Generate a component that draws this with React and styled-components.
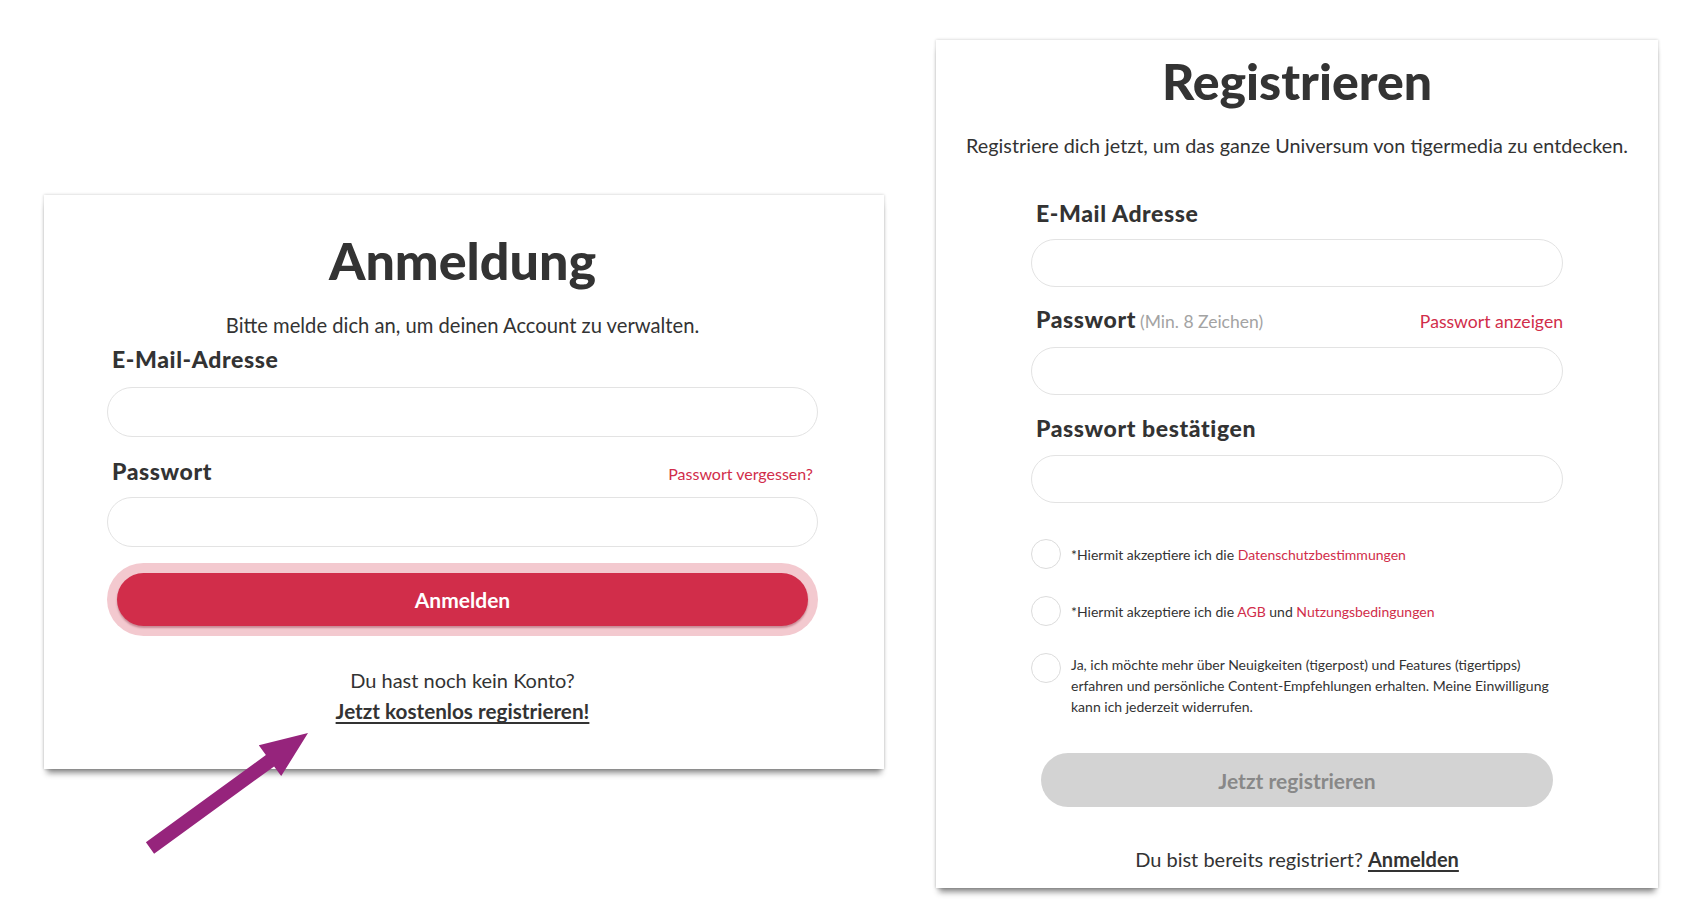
import React from 'react';
import styled, { createGlobalStyle } from 'styled-components';

const GlobalStyle = createGlobalStyle`
    * { box-sizing: border-box; }
    body {
        margin: 0;
        background: #ffffff;
        font-family: Lato, "Open Sans", "Liberation Sans", sans-serif;
        color: #333333;
    }
`

const Page = styled.div`
    position: relative;
    width: 1702px;
    height: 922px;
    display: flex;
    align-items: flex-start;
    gap: 52px;
    padding: 40px 0 0 44px;
    overflow: hidden;
`
const Card = styled.div`
    background: #ffffff;
    box-shadow: 0 0 3px rgba(0, 0, 0, 0.22), 0 7px 6px -3px rgba(0, 0, 0, 0.45);
    display: flex;
    flex-direction: column;
    align-items: center;
`
const LoginCard = styled(Card)`
    width: 840px;
    margin-top: 155px;
    padding: 34px 66px 42px 63px;
`
const RegisterCard = styled(Card)`
    width: 722px;
    padding: 11px 0 15px 0;
`
const Title = styled.h1`
    margin: 0;
    font-size: ${p => p.$size || 52}px;
    line-height: 1.2;
    font-weight: 900;
    color: #333333;
    text-align: center;
`
const Lead = styled.p`
    margin: ${p => p.$gap || 20}px 0 0 0;
    font-size: ${p => p.$size || 20}px;
    line-height: ${p => p.$line || 28}px;
    text-align: center;
`
const Form = styled.div`
    width: ${p => p.$width || '100%'};
    display: flex;
    flex-direction: column;
    margin-top: ${p => p.$top || 0}px;
`
const LabelRow = styled.div`
    display: flex;
    justify-content: space-between;
    align-items: baseline;
    height: 28px;
    padding: 0 ${p => p.$right || 0}px 0 5px;
    margin-top: ${p => p.$top || 0}px;
    line-height: 28px;
    white-space: nowrap;
`
const Label = styled.label`
    font-size: 23px;
    font-weight: 900;
    letter-spacing: 0.6px;
    color: #333333;
`
const Hint = styled.span`
    font-size: 17.5px;
    font-weight: 400;
    letter-spacing: 0;
    color: #a3a3a3;
    margin-left: 4px;
`
const RedLink = styled.a`
    font-size: ${p => p.$size || 16}px;
    color: #d12d4a;
    text-decoration: none;
    cursor: pointer;
`
const Input = styled.input`
    display: block;
    width: 100%;
    height: ${p => p.$height || 49}px;
    margin-top: ${p => p.$top || 13}px;
    border: 1px solid #e3e3e3;
    border-radius: 999px;
    background: #ffffff;
    outline: none;
    padding: 0 22px;
    font: inherit;
    font-size: 18px;
`
const ButtonRing = styled.div`
    margin-top: ${p => p.$top || 0}px;
    padding: 10px;
    border-radius: 999px;
    background: ${p => p.$ring || 'transparent'};
`
const Button = styled.button`
    display: block;
    width: 100%;
    height: ${p => p.$height || 53}px;
    border: none;
    border-radius: 999px;
    background: ${p => p.$bg};
    color: ${p => p.$color};
    font-family: inherit;
    font-size: 21px;
    font-weight: 700;
    box-shadow: ${p => p.$shadow ? '0 2px 2px rgba(120, 20, 40, 0.35)' : 'none'};
    cursor: pointer;
`
const Footer = styled.div`
    margin-top: ${p => p.$top || 0}px;
    font-size: 20px;
    line-height: ${p => p.$line || 28}px;
    text-align: center;
`
const StrongLink = styled.a`
    display: ${p => p.$block ? 'block' : 'inline'};
    font-size: ${p => p.$size || 20}px;
    font-weight: 700;
    color: #333333;
    text-decoration: underline;
    text-underline-offset: 3px;
    cursor: pointer;
`
const Consents = styled.div`
    display: flex;
    flex-direction: column;
    gap: 27px;
    margin-top: 36px;
`
const ConsentRow = styled.label`
    display: flex;
    align-items: ${p => p.$top ? 'flex-start' : 'center'};
    gap: 10px;
    cursor: pointer;
`
const Circle = styled.span`
    flex: none;
    width: 30px;
    height: 30px;
    border: 1px solid #dcdcdc;
    border-radius: 50%;
    background: #ffffff;
`
const ConsentText = styled.span`
    font-size: 14px;
    line-height: 21px;
    color: #333333;
    padding-top: ${p => p.$top ? 1 : 0}px;
`
const Arrow = styled.svg`
    position: absolute;
    left: 140px;
    top: 728px;
    width: 175px;
    height: 130px;
`

function Login() {
    return (
        <LoginCard>
            <Title>Anmeldung</Title>
            <Lead $size={20.2}>Bitte melde dich an, um deinen Account zu verwalten.</Lead>
            <Form $top={6}>
                <LabelRow>
                    <Label>E-Mail-Adresse</Label>
                </LabelRow>
                <Input type="email" $height={50} $top={14} />
                <LabelRow $top={20} $right={5}>
                    <Label>Passwort</Label>
                    <RedLink>Passwort vergessen?</RedLink>
                </LabelRow>
                <Input type="password" $height={50} $top={12} />
                <ButtonRing $top={16} $ring="#f3c9cf">
                    <Button $bg="#d12d4a" $color="#ffffff" $shadow>Anmelden</Button>
                </ButtonRing>
            </Form>
            <Footer $top={29} $line={31}>
                Du hast noch kein Konto?
                <StrongLink $block $size={20.7}>Jetzt kostenlos registrieren!</StrongLink>
            </Footer>
        </LoginCard>
    )
}

function Register() {
    return (
        <RegisterCard>
            <Title $size={50}>Registrieren</Title>
            <Lead $size={19.8} $line={26} $gap={21}>
                Registriere dich jetzt, um das ganze Universum von tigermedia zu entdecken.
            </Lead>
            <Form $width="532px" $top={41}>
                <LabelRow>
                    <Label>E-Mail Adresse</Label>
                </LabelRow>
                <Input type="email" $height={48} $top={12} />
                <LabelRow $top={18}>
                    <Label>Passwort<Hint>(Min. 8 Zeichen)</Hint></Label>
                    <RedLink $size={17.6}>Passwort anzeigen</RedLink>
                </LabelRow>
                <Input type="password" $height={48} $top={14} />
                <LabelRow $top={19}>
                    <Label>Passwort bestätigen</Label>
                </LabelRow>
                <Input type="password" $height={48} $top={13} />
                <Consents>
                    <ConsentRow>
                        <Circle />
                        <ConsentText>
                            *Hiermit akzeptiere ich die <RedLink $size={14}>Datenschutzbestimmungen</RedLink>
                        </ConsentText>
                    </ConsentRow>
                    <ConsentRow>
                        <Circle />
                        <ConsentText>
                            *Hiermit akzeptiere ich die <RedLink $size={14}>AGB</RedLink> und <RedLink $size={14}>Nutzungsbedingungen</RedLink>
                        </ConsentText>
                    </ConsentRow>
                    <ConsentRow $top>
                        <Circle />
                        <ConsentText $top>
                            Ja, ich möchte mehr über Neuigkeiten (tigerpost) und Features (tigertipps)<br />
                            erfahren und persönliche Content-Empfehlungen erhalten. Meine Einwilligung<br />
                            kann ich jederzeit widerrufen.
                        </ConsentText>
                    </ConsentRow>
                </Consents>
                <ButtonRing $top={26}>
                    <Button $bg="#d3d3d3" $color="#888888" $height={54}>Jetzt registrieren</Button>
                </ButtonRing>
            </Form>
            <Footer $top={28}>
                Du bist bereits registriert? <StrongLink>Anmelden</StrongLink>
            </Footer>
        </RegisterCard>
    )
}

function App() {
    return (
        <>
            <GlobalStyle />
            <Page>
                <Login />
                <Register />
                <Arrow viewBox="0 0 175 130">
                    <polygon
                        fill="#96247c"
                        points="168,5 141.2,48.1 134.1,38.4 14.1,125.7 5.9,114.3 125.9,27 118.8,17.3"
                    />
                </Arrow>
            </Page>
        </>
    )
}

export default App
